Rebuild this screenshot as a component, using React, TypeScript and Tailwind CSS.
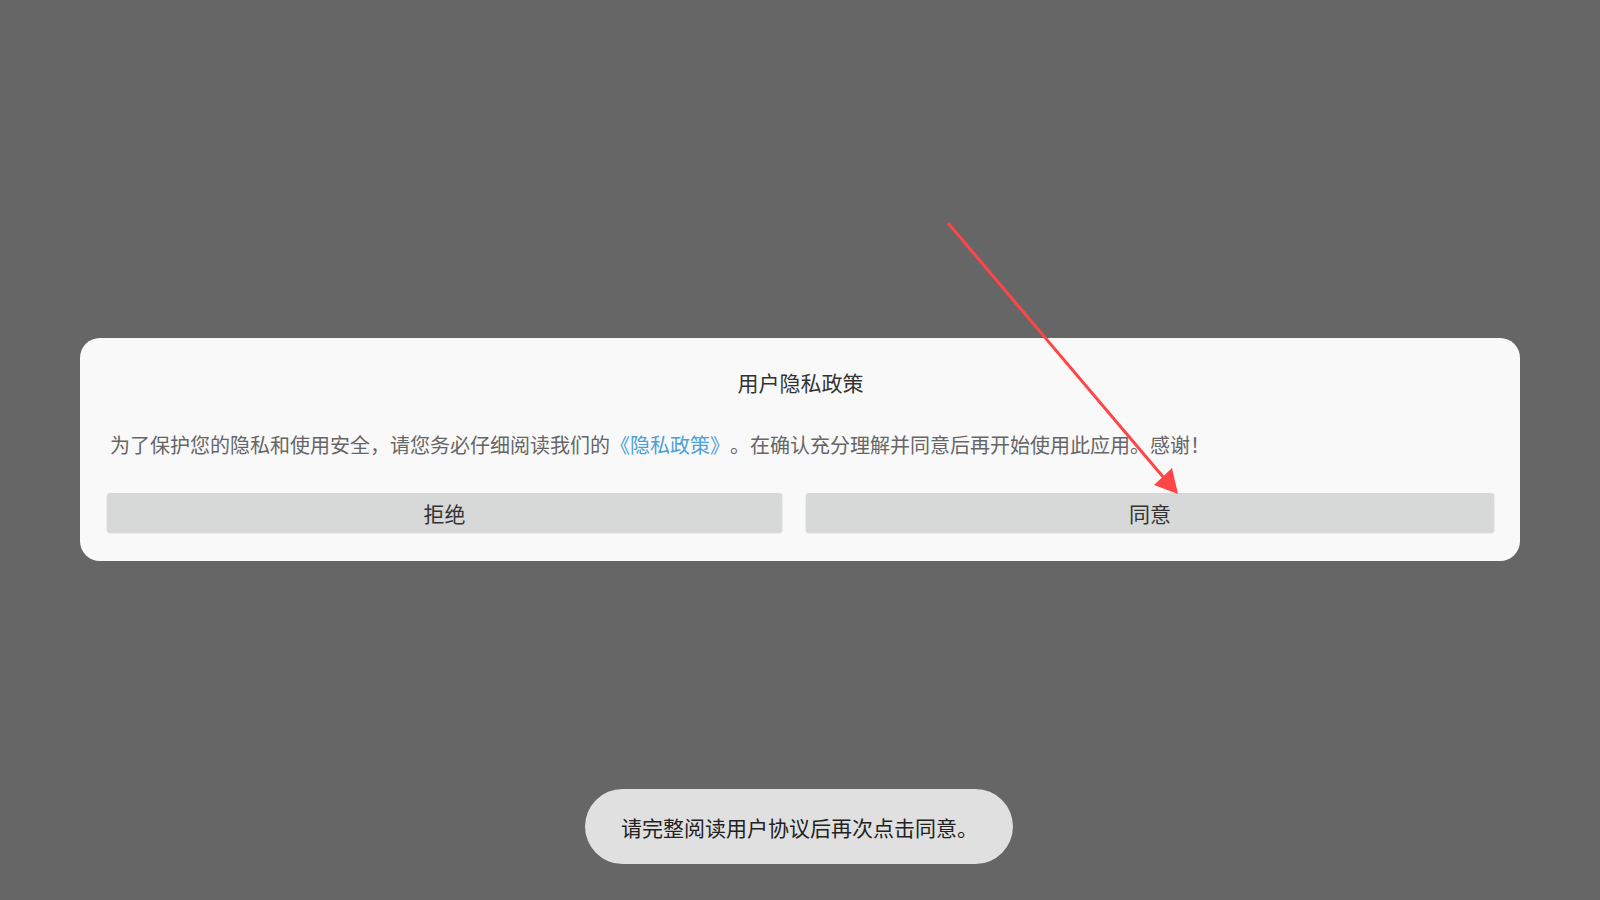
import React from "react";

export default function App() {
  return (
    <div
      className="relative w-[1600px] h-[900px] overflow-hidden bg-[#666666] [text-spacing-trim:space-all]"
      style={{ fontFamily: '"Noto Sans CJK SC", "Noto Sans", sans-serif' }}
    >
      <div className="pt-[338px] px-[80px]">
        <div className="bg-[#f9f9f9] rounded-[20px] pt-[30px] pb-[29px] pl-[27px] pr-[26px]">
          <div className="text-center text-[21px] leading-[28px] text-[#333333]">用户隐私政策</div>
          <p className="mt-[35px] pl-[3px] text-[20px] leading-[28px] text-[#666666] whitespace-nowrap [text-spacing-trim:space-all]">
            为了保护您的隐私和使用安全，请您务必仔细阅读我们的<span className="text-[#4c9fd8]">《隐私政策》</span>。在确认充分理解并同意后再开始使用此应用。感谢！
          </p>
          <div className="mt-[34px] flex gap-[24px]">
            <button className="w-[675px] h-[39px] bg-[#d7d9d8] rounded-[3px] shadow-[0_1px_2px_rgba(0,0,0,0.18)] text-[21px] leading-[28px] pt-[1px] text-[#333333]">
              拒绝
            </button>
            <button className="flex-1 h-[39px] bg-[#d7d9d8] rounded-[3px] shadow-[0_1px_2px_rgba(0,0,0,0.18)] text-[21px] leading-[28px] pt-[1px] text-[#333333]">
              同意
            </button>
          </div>
        </div>
      </div>

      <svg
        className="absolute left-0 top-0 pointer-events-none"
        width="1600"
        height="900"
        viewBox="0 0 1600 900"
      >
        <line x1="948" y1="223" x2="1164" y2="478" stroke="#ff4545" strokeWidth="3" />
        <polygon points="1178,494 1154,485 1172,468" fill="#ff4545" />
      </svg>

      <div className="absolute left-[585px] top-[789px] w-[428px] h-[75px] rounded-full bg-[#e0e0e0] flex items-center pl-[36px]">
        <span className="text-[21px] leading-[28px] text-[#222222] pt-[1px] whitespace-nowrap [text-spacing-trim:space-all]">请完整阅读用户协议后再次点击同意。</span>
      </div>
    </div>
  );
}
